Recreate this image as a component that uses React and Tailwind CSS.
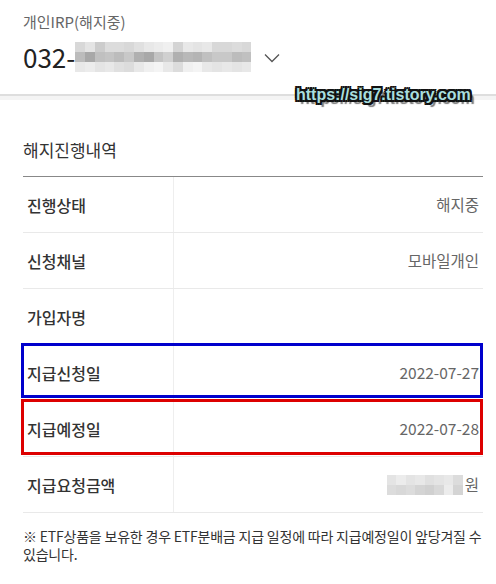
import React from 'react';

const accountMosaic = [
  ['#d8d8d8', '#e4e4e4', '#cccccc', '#dcdcdc', '#dcdcdc', '#d8d8d8', '#e0e0e0', '#e8e8e8', '#ececec', '#f0f0f0', '#d4d4d4', '#e8e8e8', '#e4e4e4', '#e8e8e8', '#d8d8d8', '#d8d8d8', '#dcdcdc', '#d8d8d8'],
  ['#bcbcbc', '#a8a8a8', '#c0c0c0', '#c4c4c4', '#bcbcbc', '#c8c8c8', '#b0b0b0', '#a8a8a8', '#c4c4c4', '#d0d0d0', '#b0b0b0', '#b8b8b8', '#b4b4b4', '#c0c0c0', '#c8c8c8', '#c8c8c8', '#bcbcbc', '#c0c0c0'],
  ['#e8e8e8', '#ececec', '#e4e4e4', '#e8e8e8', '#e0e0e0', '#dcdcdc', '#e8e8e8', '#f0f0f0', '#f4f4f4', '#e8e8e8', '#dcdcdc', '#f0f0f0', '#f4f4f4', '#e8e8e8', '#e4e4e4', '#e8e8e8', '#e4e4e4', '#e8e8e8'],
];

const amountMosaic = [
  ['#e4e4e4', '#ececec', '#e4e4e4', '#e8e8e8', '#e0e0e0', '#e4e4e4', '#e8e8e8', '#dcdcdc'],
  ['#dcdcdc', '#d8d8d8', '#dcdcdc', '#d4d4d4', '#d0d0d0', '#d8d8d8', '#ececec', '#d4d4d4'],
];

function Mosaic({ cells, className }) {
  return (
    <div className={className}>
      {cells.flat().map((c, i) => (
        <div key={i} style={{ backgroundColor: c }} />
      ))}
    </div>
  );
}

const rows = [
  { label: '진행상태', value: '해지중' },
  { label: '신청채널', value: '모바일개인' },
  { label: '가입자명', value: '' },
  { label: '지급신청일', value: '2022-07-27' },
  { label: '지급예정일', value: '2022-07-28' },
  { label: '지급요청금액', value: 'amount' },
];

export default function App() {
  return (
    <div className="relative w-[496px] h-[584px] overflow-hidden bg-white font-['Noto_Sans_CJK_KR','Noto_Sans',sans-serif]">
      {/* account header */}
      <div className="h-[94px] px-[23px] pt-[12px]">
        <p className="text-[15px] leading-[20px] text-[#666]">개인IRP(해지중)</p>
        <div className="mt-[9px] flex h-[32px] items-center">
          <span className="text-[26px] leading-[32px] text-[#222]">032-</span>
          <Mosaic cells={accountMosaic} className="grid h-[31px] w-[176px] grid-cols-[repeat(18,1fr)] grid-rows-3" />
          <svg className="ml-[13px] mt-[2px]" width="16" height="10" viewBox="0 0 16 10" fill="none">
            <polyline points="1,1.5 8,8.5 15,1.5" stroke="#555" strokeWidth="1.3" />
          </svg>
        </div>
      </div>
      <div className="h-[2px] bg-[#dedede]" />
      <div className="h-[4px] bg-[#f4f4f4]" />

      {/* watermark */}
      <div className="absolute left-[296px] top-[84px] font-['Liberation_Sans',sans-serif] text-[16px] font-bold leading-[22px] text-[#a8dede] [text-shadow:-2px_-2px_0_#111,2px_-2px_0_#111,-2px_2px_0_#111,2px_2px_0_#111,0_2px_0_#111,0_-2px_0_#111,2px_0_0_#111,-2px_0_0_#111,4px_4px_1px_#777]">
        https://sig7.tistory.com
      </div>

      {/* history section */}
      <div className="pl-[23px] pr-[13px]">
        <h2 className="mt-[38px] text-[17px] leading-[24px] text-[#333]">해지진행내역</h2>
        <div className="relative mt-[14px] border-t border-[#888]">
          {rows.map((r) => (
            <div key={r.label} className="flex h-[56px] border-b border-[#e9e9e9]">
              <div className="flex w-[151px] items-center border-r border-[#eeeeee] pl-[4px] text-[16px] font-medium text-[#333]">
                {r.label}
              </div>
              <div className="flex flex-1 items-center justify-end pr-[4px] text-[15.5px] text-[#666]">
                {r.value === 'amount' ? (
                  <>
                    <Mosaic cells={amountMosaic} className="grid h-[20px] w-[76px] grid-cols-[repeat(8,1fr)] grid-rows-2" />
                    <span className="ml-[2px]">원</span>
                  </>
                ) : (
                  r.value
                )}
              </div>
            </div>
          ))}
          <div className="absolute left-[-2px] top-[166px] h-[55px] w-[462px] border-[3px] border-[#0000cc]" />
          <div className="absolute left-[-2px] top-[222px] h-[56px] w-[462px] border-[3px] border-[#dd0000]" />
        </div>
        <p className="mt-[14px] text-[14px] leading-[18px] tracking-[-0.2px] text-[#333]">
          ※ ETF상품을 보유한 경우 ETF분배금 지급 일정에 따라 지급예정일이 앞당겨질 수 있습니다.
        </p>
      </div>
    </div>
  );
}
